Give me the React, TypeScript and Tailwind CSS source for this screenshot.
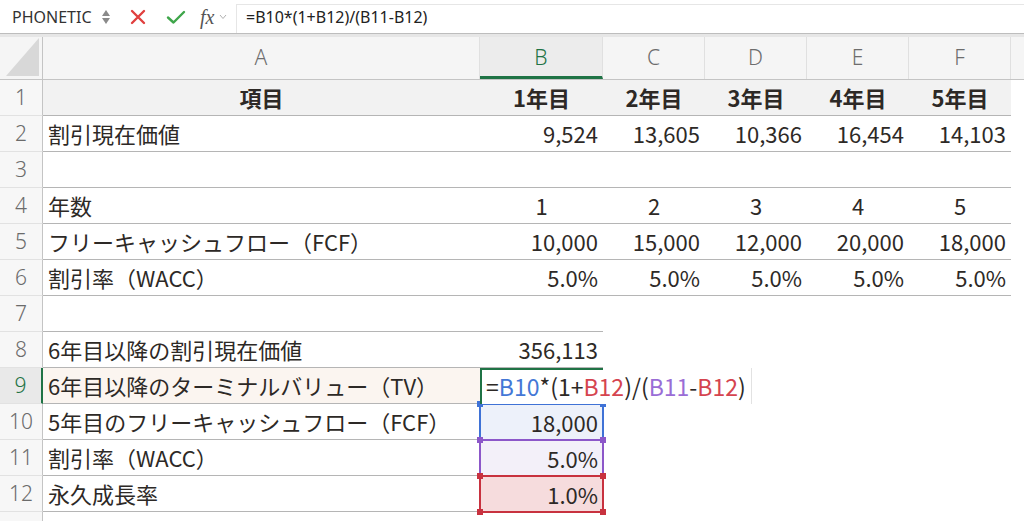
import type { ReactNode } from "react";

const CELL_FONT = { fontFamily: '"Noto Sans CJK JP", "Noto Sans", sans-serif' };
const UI_FONT = { fontFamily: '"Noto Sans", "Liberation Sans", sans-serif' };

type Align = "left" | "center" | "right";
type Cell = { text?: ReactNode; align?: Align; bold?: boolean };

// widths of columns A..F
const colW = ["w-[437px]", "w-[123px]", "w-[102px]", "w-[102px]", "w-[102px]", "w-[102px]"];
const colLetters = ["A", "B", "C", "D", "E", "F"];

const alignCls: Record<Align, string> = {
  left: "justify-start pl-[5px]",
  center: "justify-center",
  right: "justify-end pr-[5px]",
};

// rows 1..6, table with borders over A..F
const table: Cell[][] = [
  [
    { text: "項目", align: "center", bold: true },
    { text: "1年目", align: "center", bold: true },
    { text: "2年目", align: "center", bold: true },
    { text: "3年目", align: "center", bold: true },
    { text: "4年目", align: "center", bold: true },
    { text: "5年目", align: "center", bold: true },
  ],
  [
    { text: "割引現在価値" },
    { text: "9,524", align: "right" },
    { text: "13,605", align: "right" },
    { text: "10,366", align: "right" },
    { text: "16,454", align: "right" },
    { text: "14,103", align: "right" },
  ],
  [{}, {}, {}, {}, {}, {}],
  [
    { text: "年数" },
    { text: "1", align: "center" },
    { text: "2", align: "center" },
    { text: "3", align: "center" },
    { text: "4", align: "center" },
    { text: "5", align: "center" },
  ],
  [
    { text: "フリーキャッシュフロー（FCF）" },
    { text: "10,000", align: "right" },
    { text: "15,000", align: "right" },
    { text: "12,000", align: "right" },
    { text: "20,000", align: "right" },
    { text: "18,000", align: "right" },
  ],
  [
    { text: "割引率（WACC）" },
    { text: "5.0%", align: "right" },
    { text: "5.0%", align: "right" },
    { text: "5.0%", align: "right" },
    { text: "5.0%", align: "right" },
    { text: "5.0%", align: "right" },
  ],
];

const RowHead = ({ n, active }: { n: number; active?: boolean }) => (
  <div
    className={`w-[43px] shrink-0 flex items-center justify-center border-b border-[#e2e2e2] text-[21px] font-light ${
      active
        ? "bg-[#e9e9e9] text-[#1f7345] border-r-2 border-r-[#1f7345]"
        : "bg-[#f7f7f7] text-[#6b6b6b] border-r border-r-[#c4c4c4]"
    }`}
    style={UI_FONT}
  >
    {n}
  </div>
);

const TextCell = ({ cell, w, line, bg }: { cell: Cell; w: string; line?: boolean; bg?: string }) => (
  <div
    className={`${w} shrink-0 flex items-center whitespace-nowrap ${alignCls[cell.align ?? "left"]} ${
      line ? "border-b border-[#b5b5b5]" : ""
    } ${bg ?? ""} ${cell.bold ? "font-bold" : ""}`}
  >
    {cell.text}
  </div>
);

const Corner = ({ color, pos }: { color: string; pos: string }) => (
  <span className={`absolute w-[6px] h-[6px] ${color} ${pos}`} />
);

// coloured range box around a referenced cell
const RangeBox = ({ border, fill, square, children }: { border: string; fill: string; square: string; children: ReactNode }) => (
  <div className={`relative w-[123px] shrink-0 flex items-center justify-end pr-[5px] ${fill}`}>
    {children}
    <div className={`absolute -left-px -right-[1px] -top-px -bottom-px border-2 ${border}`} />
    <Corner color={square} pos="-left-[3px] -top-[3px]" />
    <Corner color={square} pos="-right-[3px] -top-[3px]" />
    <Corner color={square} pos="-left-[3px] -bottom-[3px]" />
    <Corner color={square} pos="-right-[3px] -bottom-[3px]" />
  </div>
);

const FormulaBar = () => (
  <div className="h-[33px] flex items-stretch bg-white" style={UI_FONT}>
    <div className="w-[96px] flex items-center pl-[12px] text-[16px] text-[#333]">PHONETIC</div>
    <div className="w-[20px] flex flex-col items-center justify-center gap-[2px]">
      <svg width="8" height="6" viewBox="0 0 8 6"><path d="M4 0 L8 6 L0 6 Z" fill="#8a8a8a" /></svg>
      <svg width="8" height="6" viewBox="0 0 8 6"><path d="M0 0 L8 0 L4 6 Z" fill="#8a8a8a" /></svg>
    </div>
    <div className="w-[120px] flex items-center pl-[14px] gap-[20px]">
      <svg width="16" height="16" viewBox="0 0 16 16">
        <path d="M2 2 L14 14 M14 2 L2 14" stroke="#e0403f" strokeWidth="2.4" strokeLinecap="round" />
      </svg>
      <svg width="20" height="16" viewBox="0 0 20 16">
        <path d="M2 8.5 L7.5 13.5 L18 3" stroke="#3fa64a" strokeWidth="2.4" fill="none" strokeLinecap="round" strokeLinejoin="round" />
      </svg>
      <div className="flex items-center gap-[5px] -ml-[6px]">
        <span className="italic text-[20px] text-[#555] leading-none" style={{ fontFamily: '"Liberation Serif", serif' }}>
          fx
        </span>
        <svg width="8" height="6" viewBox="0 0 8 6"><path d="M1 1 L4 4.5 L7 1" stroke="#b0b0b0" strokeWidth="1" fill="none" /></svg>
      </div>
    </div>
    <div className="flex-1 mt-[4px] border-t border-l border-[#e6e6e6] flex items-center pl-[9px] pb-[4px] text-[16px] text-[#222]">
      =B10*(1+B12)/(B11-B12)
    </div>
  </div>
);

const ColumnHeader = () => (
  <div className="h-[43px] flex bg-[#f5f5f5] border-b border-[#c4c4c4]" style={UI_FONT}>
    <div className="w-[43px] shrink-0 flex items-end justify-start pl-[6px] pb-[3px] border-r border-[#c4c4c4]">
      <svg width="33" height="38" viewBox="0 0 33 38"><path d="M33 0 L33 38 L0 38 Z" fill="#d8d8d8" /></svg>
    </div>
    {colLetters.map((l, i) => (
      <div
        key={l}
        className={`${colW[i]} shrink-0 flex items-center justify-center text-[21px] font-light border-r border-[#e0e0e0] ${
          l === "B" ? "bg-[#ececec] text-[#1f7345] border-b-[3px] border-b-[#1f7345] pt-[3px]" : "text-[#6d6d6d]"
        }`}
      >
        {l}
      </div>
    ))}
    <div className="flex-1" />
  </div>
);

const FormulaText = () => (
  <>
    <span>=</span>
    <span className="text-[#4477d6]">B10</span>
    <span>*(1+</span>
    <span className="text-[#d5444f]">B12</span>
    <span>)/(</span>
    <span className="text-[#9a6dd6]">B11</span>
    <span>-</span>
    <span className="text-[#d5444f]">B12</span>
    <span>)</span>
  </>
);

export default function App() {
  const line = "border-b border-[#b5b5b5]";
  return (
    <div className="w-[1024px] h-[521px] overflow-hidden bg-white">
      <FormulaBar />
      <div className="h-[4px] border-t border-[#bdbdbd] bg-[#e6e6e6]" />
      <ColumnHeader />

      <div className="text-[22px] text-[#2d2926]" style={CELL_FONT}>
        {table.map((row, r) => (
          <div key={r} className={`h-[36px] flex ${r === 0 ? "bg-[#f2f2f2]" : ""}`}>
            <RowHead n={r + 1} />
            {row.map((cell, c) => (
              <TextCell key={c} cell={cell} w={colW[c]} line />
            ))}
            <div className="flex-1 bg-white" />
          </div>
        ))}

        {/* row 7 */}
        <div className="h-[36px] flex">
          <RowHead n={7} />
          <div className={`w-[560px] shrink-0 ${line}`} />
        </div>

        {/* row 8 */}
        <div className="h-[36px] flex">
          <RowHead n={8} />
          <TextCell cell={{ text: "6年目以降の割引現在価値" }} w={colW[0]} line />
          <TextCell cell={{ text: "356,113", align: "right" }} w={colW[1]} line />
        </div>

        {/* row 9: cell being edited */}
        <div className="h-[36px] flex">
          <RowHead n={9} active />
          <TextCell cell={{ text: "6年目以降のターミナルバリュー（TV）" }} w={colW[0]} line bg="bg-[#fbf5f0]" />
          <div className="relative w-[123px] shrink-0">
            <div className="absolute left-0 top-0 h-[36px] w-[272px] z-10 bg-white flex items-center pl-[6px] whitespace-nowrap border-r border-[#e2e2e2] text-[23px]">
              <div className="absolute left-0 top-0 w-[123px] h-[36px] border-t-2 border-l-2 border-[#1f7345]" />
              <FormulaText />
            </div>
          </div>
        </div>

        {/* row 10 */}
        <div className="h-[36px] flex">
          <RowHead n={10} />
          <TextCell cell={{ text: "5年目のフリーキャッシュフロー（FCF）" }} w={colW[0]} line />
          <RangeBox border="border-[#3f72d6]" fill="bg-[#edf1fa]" square="bg-[#3f72d6]">
            18,000
          </RangeBox>
        </div>

        {/* row 11 */}
        <div className="h-[36px] flex">
          <RowHead n={11} />
          <TextCell cell={{ text: "割引率（WACC）" }} w={colW[0]} line />
          <RangeBox border="border-[#8c57c9]" fill="bg-[#f3f0f9]" square="bg-[#8c57c9]">
            5.0%
          </RangeBox>
        </div>

        {/* row 12 */}
        <div className="h-[36px] flex">
          <RowHead n={12} />
          <TextCell cell={{ text: "永久成長率" }} w={colW[0]} line />
          <RangeBox border="border-[#c8323f]" fill="bg-[#f6dcdd]" square="bg-[#c8323f]">
            1.0%
          </RangeBox>
        </div>

        {/* row 13 */}
        <div className="h-[36px] flex">
          <RowHead n={13} />
        </div>
      </div>
    </div>
  );
}
